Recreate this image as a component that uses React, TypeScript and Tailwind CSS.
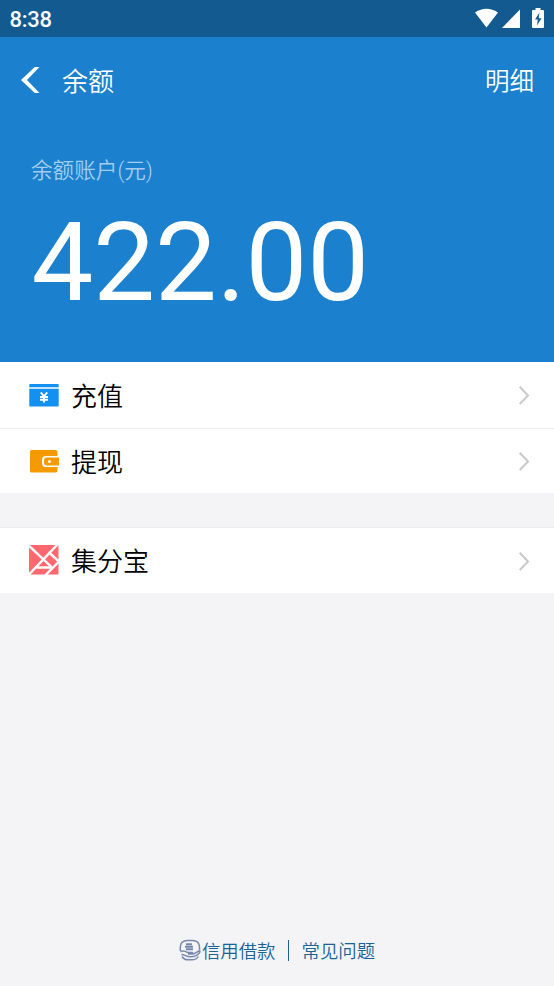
import React from "react";

const Chevron = () => (
  <svg className="h-5 w-3 shrink-0" viewBox="0 0 12 20" fill="none" stroke="#c9c9cc" strokeWidth="2">
    <path d="M1.7 1.7 10 10.500 1.700 19" />
  </svg>
);

const RechargeIcon = () => (
  <svg className="h-[30px] w-[30px]" viewBox="0 0 30 30">
    <path fill="#1390f0" d="M1 4h28q.7 0 .7.7V7.200H.3V4.700Q.3 4 1 4ZM.3 8.800h29.400v17q0 .7-.7.7H1q-.7 0-.7-.7Z" />
    <path fill="none" stroke="#fff" strokeWidth="1.900" d="m11.800 12.300 3.200 4 3.200-4M15 16v6.500M11 17h8M11 19.800h8" />
  </svg>
);

const WalletIcon = () => (
  <svg className="h-[30px] w-[30px]" viewBox="0 0 30 30">
    <path fill="#f59a00" d="M2.500 4h24q2 0 2 2v4H17q-4 0-4 4v3q0 4 4 4h11.500v3.500q0 2-2 2h-24q-1.500 0-1.500-1.500V5.500Q1 4 2.500 4Z" />
    <path fill="#f59a00" d="M18 11.500h12v8H18q-3 0-3-3v-2q0-3 3-3Z" />
    <circle cx="20.500" cy="15.500" r="1.500" fill="#fff" />
  </svg>
);

const PointsIcon = () => (
  <svg className="-mt-px h-[30px] w-[30px]" viewBox="0 0 30 30">
    <path fill="#ff686e" d="M0 0h29.500v29.500H0z" />
    <path fill="none" stroke="#fff" strokeWidth="2.400" d="M0 .8 22.500 22M28.500-.5 0 29.500M19.500 7 30 16.500M30.500 16 16.500 30M7.500 22.500h15" />
  </svg>
);

const LoanIcon = () => (
  <svg className="h-[22px] w-[22px]" viewBox="0 0 22 22" fill="none" stroke="#7889ae">
    <path strokeWidth="1.500" d="M1.300 12V8.500C1.300 4 4 1.500 8.500 1.500h5c4.500 0 7 2.500 7 7v3M3 17.500c1.500 2.500 3.500 3.300 6 3.300h4c3 0 5-1 6.300-3.300" />
    <path strokeWidth="2" d="M7 5.200h6M6 7.700h8M7 10.200h7" />
    <path strokeWidth="1.500" d="M1.500 12.500c3-1 5-.3 7 1h4.500c1.200.3 1 1.500 0 1.600H9M13.500 15c2.500 0 4.500-2 6.300-3 1.300-.3 1.500.8.7 1.700-2.500 3-6 4.300-9.500 4.100-3.500-.2-5.500-2.300-8.500-2.300" />
  </svg>
);

function Row({ icon, label, className }: { icon: React.ReactNode; label: string; className: string }) {
  return (
    <div className={`flex items-center bg-white pl-[29px] pr-6 ${className}`}>
      {icon}
      <span className="ml-3 flex-1 pt-[3px] text-[26px] leading-[38px] text-black">{label}</span>
      <Chevron />
    </div>
  );
}

export default function App() {
  return (
    <div className="flex h-[986px] w-full flex-col bg-[#f4f4f7] font-[Roboto,'Noto_Sans_CJK_SC',sans-serif]">
      <div className="flex h-[37px] items-center justify-between bg-[#125a8f] pl-[9.5px] pr-[9px] text-white">
        <span className="pt-[2px] text-[22px] font-medium leading-7 tracking-[-0.3px]">8:38</span>
        <svg className="h-[37px] w-[70px]" viewBox="475 0 70 37" fill="#fff">
          <path d="M475 12.500q11.500-7.500 23 0L486.500 27.500ZM520 9.500V28h-18ZM535.500 10V8h5v2h2.500q1 0 1 1v16q0 1-1 1h-10q-1 0-1-1V11q0-1 1-1Z" />
          <path fill="#125a8f" d="m539.500 12.500-4.500 7h2.800l-.8 6 4.500-7.200h-2.800Z" />
        </svg>
      </div>
      <div className="h-[325px] bg-[#1b81cf] text-white">
        <div className="flex h-[86px] items-center pl-[20px] pr-5">
          <svg className="h-[28px] w-[20px]" viewBox="0 0 20 28" fill="none">
            <path fill="#fff" d="M14.800 1h4.700L7 14l12.500 13h-4.700L1 14Z" />
          </svg>
          <span className="ml-[22px] flex-1 pt-1 text-[26px] font-[350] leading-[38px]">余额</span>
          <span className="pt-1 text-[24.500px] font-[350] leading-[36px]">明细</span>
        </div>
        <div className="pl-[31px] pt-[32px]">
          <div className="text-[21.600px] font-[350] leading-8 text-[#a4cdec]">余额账户(元)</div>
          <div className="mt-[11px] pl-[0.5px] text-[110px] leading-[130px] tracking-[-0.1px]">422.00</div>
        </div>
      </div>
      <Row icon={<RechargeIcon />} label="充值" className="h-[67px] border-b border-[#ececef] font-[350]" />
      <Row icon={<WalletIcon />} label="提现" className="h-[64px] font-[350]" />
      <Row icon={<PointsIcon />} label="集分宝" className="mt-[34px] h-[66px] border-t border-[#ececef] font-[350]" />
      <div className="mt-auto flex h-[72px] items-center justify-center text-[18.400px] font-[350] leading-7 text-[#19639a]">
        <LoanIcon />
        <span className="ml-px pt-[3px]">信用借款</span>
        <span className="ml-3 mr-[13px] mt-px h-[21px] w-px bg-[#19639a]" />
        <span className="pt-[3px]">常见问题</span>
      </div>
    </div>
  );
}
